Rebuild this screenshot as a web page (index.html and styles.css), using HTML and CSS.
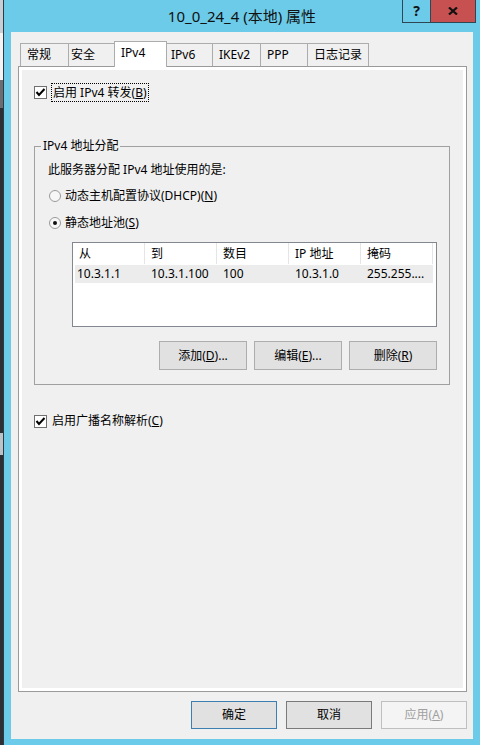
FILE: index.html
```html
<!DOCTYPE html>
<html lang="zh-CN">
<head>
  <meta charset="UTF-8">
  <title>10_0_24_4 (本地) 属性</title>
  <link rel="stylesheet" href="styles.css">
</head>
<body>
  <div class="desktop-strip">
    <div class="band band-sky"></div>
    <div class="band band-white"></div>
    <div class="band band-gray"></div>
    <div class="band band-dark"></div>
    <div class="band band-light"></div>
  </div>

  <div class="window">
    <div class="titlebar">
      <div class="title">10_0_24_4 (本地) 属性</div>
      <div class="caption-buttons">
        <div class="cap-btn cap-help">?</div>
        <div class="cap-btn cap-close">
          <svg width="10" height="8" viewBox="0 0 10 8"><path d="M1 0.5 L9 7.5 M9 0.5 L1 7.5" stroke="#111" stroke-width="2.2" fill="none"/></svg>
        </div>
      </div>
    </div>

    <div class="client">
      <div class="tabs">
        <div class="tab tab-general">常规</div>
        <div class="tab tab-security">安全</div>
        <div class="tab tab-ipv4 active">IPv4</div>
        <div class="tab tab-ipv6">IPv6</div>
        <div class="tab tab-ikev2">IKEv2</div>
        <div class="tab tab-ppp">PPP</div>
        <div class="tab tab-log">日志记录</div>
      </div>

      <div class="tab-panel">
        <div class="page">
          <div class="check-row">
            <span class="checkbox">
              <svg width="11" height="11" viewBox="0 0 11 11"><path d="M1.5 5 L4 8 L9.5 2" fill="none" stroke="#000" stroke-width="2"/></svg>
            </span>
            <span class="focus-label">启用 IPv4 转发(<u>B</u>)</span>
          </div>

          <fieldset class="groupbox">
            <legend>IPv4 地址分配</legend>
            <div class="group-body">
              <div class="desc">此服务器分配 IPv4 地址使用的是:</div>
              <div class="radio-row first">
                <span class="radio"></span>
                <span>动态主机配置协议(DHCP)(<u>N</u>)</span>
              </div>
              <div class="radio-row">
                <span class="radio checked"></span>
                <span>静态地址池(<u>S</u>)</span>
              </div>

              <div class="listview">
                <div class="list-header">
                  <div class="col">从</div>
                  <div class="col">到</div>
                  <div class="col">数目</div>
                  <div class="col">IP 地址</div>
                  <div class="col">掩码</div>
                </div>
                <div class="list-row">
                  <div class="cell">10.3.1.1</div>
                  <div class="cell">10.3.1.100</div>
                  <div class="cell">100</div>
                  <div class="cell">10.3.1.0</div>
                  <div class="cell">255.255....</div>
                </div>
              </div>

              <div class="list-buttons">
                <button class="btn">添加(<u>D</u>)...</button>
                <button class="btn">编辑(<u>E</u>)...</button>
                <button class="btn">删除(<u>R</u>)</button>
              </div>
            </div>
          </fieldset>

          <div class="check-row broadcast">
            <span class="checkbox">
              <svg width="11" height="11" viewBox="0 0 11 11"><path d="M1.5 5 L4 8 L9.5 2" fill="none" stroke="#000" stroke-width="2"/></svg>
            </span>
            <span class="plain-label">启用广播名称解析(<u>C</u>)</span>
          </div>
        </div>
      </div>

      <div class="dialog-buttons">
        <button class="btn dlg default">确定</button>
        <button class="btn dlg cancel">取消</button>
        <button class="btn dlg" disabled>应用(<u>A</u>)</button>
      </div>
    </div>
  </div>
</body>
</html>
```

FILE: styles.css
```css
* {
  box-sizing: border-box;
}
body {
  margin: 0;
  width: 480px;
  height: 745px;
  overflow: hidden;
  display: flex;
  background: #2c3035;
  font-family: "Noto Sans", "Noto Sans CJK SC", sans-serif;
  font-size: 12px;
  line-height: 16px;
  color: #000;
}

/* bit of desktop showing left of the window */
.desktop-strip {
  width: 3px;
  flex: none;
  display: flex;
  flex-direction: column;
}
.band-sky { height: 33px; background: #c8cfd4; }
.band-white { height: 47px; background: #f4f4f4; }
.band-gray { height: 28px; background: #6a6e72; }
.band-dark { height: 325px; background: #2c3035; }
.band-light { height: 22px; background: #b9c4c9; }

.window {
  flex: none;
  width: 478px;
  height: 745px;
  background: #6bcbe8;
  border-left: 1px solid #2f3b42;
  border-right: 1px solid #2f3b42;
  display: flex;
  flex-direction: column;
}
.titlebar {
  height: 32px;
  flex: none;
  display: grid;
  grid-template-columns: 1fr auto 1fr;
  align-items: start;
}
.title {
  grid-column: 2;
  font-size: 15px;
  line-height: 20px;
  padding-top: 6px;
  color: #111;
  white-space: nowrap;
}
.caption-buttons {
  grid-column: 3;
  justify-self: end;
  display: flex;
  margin-right: 4px;
}
.cap-btn {
  height: 23px;
  border: 1px solid #2d4853;
  border-top: none;
  display: flex;
  align-items: center;
  justify-content: center;
}
.cap-help {
  width: 29px;
  font-weight: bold;
  font-size: 14px;
  color: #111;
}
.cap-close {
  width: 46px;
  margin-left: -1px;
  background: #c75050;
}

.client {
  flex: 1;
  margin: 0 7px 6px;
  background: #f0f0f0;
  display: flex;
  flex-direction: column;
  padding: 9px 6px 10px 7px;
}

.tabs {
  height: 25px;
  flex: none;
  display: flex;
  align-items: flex-end;
  padding-left: 2px;
}
.tab {
  height: 23px;
  margin-right: -1px;
  border: 1px solid #acacac;
  border-bottom: none;
  background: #f0f0f0;
  padding: 3px 0 0 6px;
  white-space: nowrap;
}
.tab.active {
  height: 26px;
  margin-bottom: -1px;
  background: #fff;
  position: relative;
  z-index: 1;
}
.tab-general { width: 49px; }
.tab-security { width: 47px; padding-left: 2px; }
.tab-ipv4 { width: 53px; }
.tab-ipv6 { width: 47px; padding-left: 4px; }
.tab-ikev2 { width: 49px; }
.tab-ppp { width: 48px; }
.tab-log { width: 62px; }

.tab-panel {
  flex: 1;
  display: flex;
  border: 1px solid #9a9a9a;
  background: #fff;
  padding: 3px;
}
.page {
  flex: 1;
  background: #f0f0f0;
  padding: 13px 13px 0 12px;
}

.check-row {
  display: flex;
  align-items: center;
  height: 19px;
}
.checkbox {
  width: 13px;
  height: 13px;
  flex: none;
  border: 1px solid #6f6f6f;
  background: #fff;
  display: flex;
  align-items: center;
  justify-content: center;
}
.focus-label {
  margin-left: 4px;
  border: 1px dotted #000;
  padding: 0 1px 0 1px;
  line-height: 17px;
}
.plain-label {
  margin-left: 5px;
}
.check-row.broadcast {
  height: 16px;
  margin-top: 28px;
}

.groupbox {
  margin: 36px 0 0;
  padding: 0 0 14px;
  border: 1px solid #a0a0a0;
  min-width: 0;
}
.groupbox legend {
  margin-left: 6px;
  padding: 0 2px;
}
.group-body {
  padding-left: 13px;
}
.desc {
  margin-top: 8px;
}
.radio-row {
  display: flex;
  align-items: center;
  margin-top: 11px;
}
.radio-row.first {
  margin-top: 10px;
}
.radio {
  width: 12px;
  height: 12px;
  margin: 0 4px 0 1px;
  border: 1px solid #9a9a9a;
  border-radius: 50%;
  background: #f7f7f7;
  display: flex;
  align-items: center;
  justify-content: center;
}
.radio.checked::after {
  content: "";
  width: 4px;
  height: 4px;
  border-radius: 50%;
  background: #111;
}

.listview {
  width: 365px;
  height: 85px;
  margin: 11px 0 0 24px;
  border: 1px solid #828790;
  background: #fff;
}
.list-header {
  display: flex;
  height: 21px;
}
.col {
  width: 72px;
  border-right: 1px solid #e5e5e5;
  padding-left: 6px;
  display: flex;
  align-items: center;
}
.list-row {
  display: flex;
  width: 358px;
  height: 18px;
  margin: 1px 0 0 2px;
  background: #ececec;
  align-items: center;
}
.cell {
  width: 72px;
  padding-left: 6px;
  white-space: nowrap;
}
.cell:first-child {
  width: 70px;
  padding-left: 2px;
}

.list-buttons {
  width: 365px;
  margin: 14px 0 0 24px;
  display: flex;
  justify-content: flex-end;
  gap: 7px;
}
.btn {
  width: 88px;
  height: 29px;
  border: 1px solid #adadad;
  background: #e1e1e1;
  font: inherit;
  color: #000;
  padding: 0;
}

.dialog-buttons {
  flex: none;
  margin-top: 9px;
  display: flex;
  justify-content: flex-end;
  gap: 9px;
}
.btn.dlg {
  width: 86px;
  height: 28px;
}
.btn.default {
  border-color: #3c7fb1;
}
.btn.cancel {
  border-color: #7a7a7a;
}
.btn:disabled {
  background: #f4f4f4;
  border-color: #bfbfbf;
  color: #a0a0a0;
}
```
